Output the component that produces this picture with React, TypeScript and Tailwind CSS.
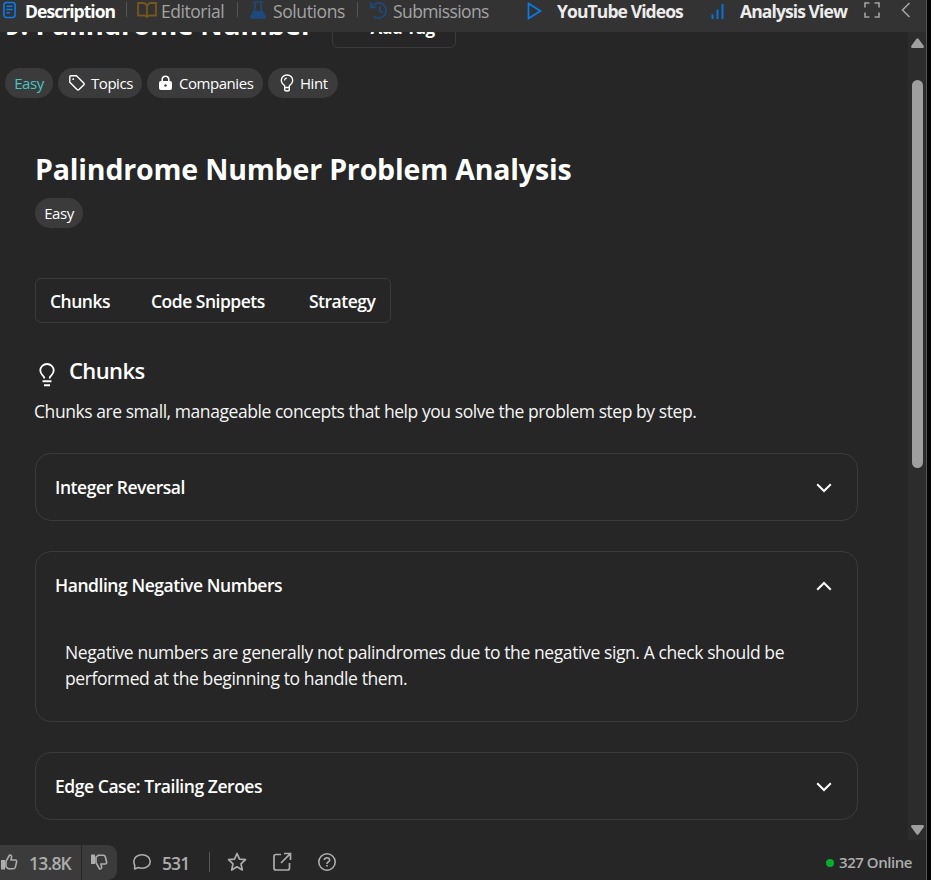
import React from "react";

const Bulb = ({ className }: { className: string }) => (
  <svg viewBox="0 0 16 24" className={className} fill="none" stroke="currentColor" strokeWidth="1.8">
    <path d="M5.200 15.500v-1.300C3.800 12.200 1.300 11 1.300 7.600a6.700 6.600 0 0 1 13.400 0c0 3.400-2.500 4.600-3.900 6.600v1.300" />
    <path d="M3.500 18.300h9M5 22.300h6" strokeWidth="2" />
  </svg>
);

const HintBulb = () => (
  <svg viewBox="0 0 14 18" className="h-[18px] w-[14px] shrink-0" fill="none" stroke="currentColor" strokeWidth="1.4">
    <path d="M4.700 13.500v-1.600C3.500 10.400 1.300 9.500 1.300 6.500a5.700 5.500 0 0 1 11.400 0c0 3-2.200 3.900-3.400 5.400v1.600Z" />
    <path d="M4.700 13v2.500q0 1.500 2.300 1.500t2.300-1.500V13" />
    <path d="M4.500 6.500Q4.600 4.300 6.800 4.100" strokeWidth="1.1" />
  </svg>
);

const Thumb = ({ down }: { down?: boolean }) => (
  <svg viewBox="0 0 18 18" className={down ? "mb-[2px] h-[18px] w-[18px] -scale-y-100" : "mb-[2px] h-[18px] w-[18px]"} fill="none" stroke="currentColor" strokeWidth="1.6" strokeLinejoin="round">
    <path d="M1 7h4v9.500H1z" fill="currentColor" stroke="none" />
    <path d="M6 13.800V8.300L9.600 2q2.200 0 2 2.200L11 7h4.300q1.600.3 1.300 2l-1.300 5.300q-.5 1.500-2 1.500H8.500z" />
  </svg>
);

const Chevron = ({ up }: { up?: boolean }) => (
  <svg viewBox="0 0 16 10" className={up ? "mt-px h-[10px] w-4 rotate-180" : "mt-px h-[10px] w-4"} fill="none" stroke="#fff" strokeWidth="2">
    <path d="m1.200 1.300 6.800 6.700 6.800-6.700" />
  </svg>
);

const Divider = ({ className }: { className: string }) => <span className={`w-px shrink-0 bg-[#545454] ${className}`} />;

function Card({ title, open, children }: { title: string; open?: boolean; children?: React.ReactNode }) {
  return (
    <section className="w-[823px] rounded-[16px] border border-[#3b3b3b]">
      <div className="flex h-[66px] items-center justify-between pr-[25px] pl-[19px]">
        <h3 className="text-[17.500px] leading-6 font-semibold tracking-[-0.450px] whitespace-nowrap">{title}</h3>
        <Chevron up={open} />
      </div>
      {children}
    </section>
  );
}

function Header() {
  return (
    <header className="flex h-8 shrink-0 bg-[#333] text-[#a3a3a3]">
      <div className="flex h-[22px] w-full items-center text-[17.500px] leading-[22px] whitespace-nowrap">
        <svg viewBox="0 0 14 18" className="mr-[9px] mb-[2px] ml-[3px] h-[18px] w-[13px] shrink-0" fill="none" stroke="#087bf0" strokeWidth="1.700">
          <rect x="1" y="1" width="12" height="16" rx="2.500" />
          <path d="M3.700 5h6.600M3.700 8.500h6.600M3.700 12h3.600" />
        </svg>
        <span className="mb-px w-[101px] font-bold tracking-[-0.950px] text-white">Description</span>
        <Divider className="mb-[3px] h-[15px]" />
        <svg viewBox="0 0 20 16" className="mr-[4px] mb-[2px] ml-[10px] h-4 w-5 shrink-0" fill="none" stroke="#77571d" strokeWidth="1.800">
          <path d="M10 3.500Q8.500 1 6 1H1v12.500h6q2.500 0 3 1.500.5-1.500 3-1.500h6V1h-5q-2.500 0-4 2.500ZM10 3.500V15" />
        </svg>
        <span className="mb-px w-[76px] tracking-[-0.450px]">Editorial</span>
        <Divider className="mb-[3px] h-[15px]" />
        <svg viewBox="0 0 16 18" className="mr-[7px] mb-[2px] ml-3 h-[18px] w-4 shrink-0" fill="none" stroke="#1d4a7c" strokeWidth="1.600">
          <path d="M3 1h10M5 1v6.500L1 15.500Q.8 17 2.300 17h11.400q1.500 0 1.300-1.500L11 7.500V1" />
          <path d="M4 10.500h8l3 6H1z" fill="#1d4a7c" />
        </svg>
        <span className="mb-px w-[84px] tracking-[-0.400px]">Solutions</span>
        <Divider className="mb-[3px] h-[15px]" />
        <svg viewBox="0 0 18 18" className="mr-[5px] mb-[2px] ml-[12px] h-[18px] w-[18px] shrink-0" fill="none" stroke="#1d4a7c" strokeWidth="1.700">
          <path d="M1 1.500v5h5M1.800 6.300A7.500 7.500 0 1 1 4 15.300M9.800 5v4.700l3 1.800" />
        </svg>
        <span className="mb-px w-[134px] tracking-[-0.600px]">Submissions</span>
        <svg viewBox="0 0 16 18" className="mr-[14px] h-[18px] w-4 shrink-0" fill="none" stroke="#087bf0" strokeWidth="1.700">
          <path d="M1.500 1.500 13.500 9 1.500 16.500Z" />
        </svg>
        <span className="w-[154px] font-bold tracking-[-0.900px] text-[#ececec]">YouTube Videos</span>
        <svg viewBox="0 0 14 18" className="mr-[15px] h-[18px] w-[14px] shrink-0" fill="none" stroke="#0873dd" strokeWidth="2">
          <path d="M1.500 12.500v4.500M6.500 7.500v9.500M11.500 2v15" />
        </svg>
        <span className="w-[124px] font-bold tracking-[-0.900px] text-[#ececec]">Analysis View</span>
        <svg viewBox="0 0 16 16" className="mb-[2px] h-4 w-4 shrink-0" fill="none" stroke="currentColor" strokeWidth="1.600">
          <path d="M1 5.500V1h4.500M10.500 1H15v4.500M15 10.500V15h-4.500M5.500 15H1v-4.500" />
        </svg>
        <svg viewBox="0 0 10 16" className="mb-[2px] ml-[21px] h-4 w-[10px] shrink-0" fill="none" stroke="currentColor" strokeWidth="1.600">
          <path d="M8.500 1 1.500 8l7 7" />
        </svg>
      </div>
    </header>
  );
}

export default function App() {
  return (
    <div className="h-[880px] w-[931px] overflow-hidden bg-[#050505] font-['Open_Sans','Noto_Sans',sans-serif] text-white">
      <div className="flex h-full w-[927px] flex-col border-r border-[#555] bg-[#262626]">
        <Header />
        <div className="flex h-[808px] shrink-0">
          <main className="w-[908px] shrink-0 overflow-hidden">
            <div className="-mt-5 flex h-9 items-start pl-[5px]">
              <h1 className="w-[327px] text-[27.500px] leading-[26px] font-bold tracking-[-0.100px] whitespace-nowrap">9. Palindrome Number</h1>
              <button className="flex h-9 w-[124px] items-center justify-center rounded-md border border-[#3b3b3b] pb-1 pl-1 text-[17px] font-bold tracking-[-0.500px]">+ Add Tag</button>
            </div>
            <div className="mt-5 flex h-[30px] gap-[5px] pl-[5px] text-[15px] tracking-[-0.450px] whitespace-nowrap">
              <span className="flex w-12 items-center justify-center rounded-full bg-[#3b3b3b] text-[#46c6c2]">Easy</span>
              <span className="flex w-[84px] items-center rounded-full bg-[#3b3b3b] pl-[11px]">
                <svg viewBox="0 0 16 16" className="mr-[6px] h-4 w-4 shrink-0" fill="none" stroke="currentColor" strokeWidth="1.400" strokeLinejoin="round">
                  <path d="M.8 2v5.200L8 14.500q1 1 2 0l4.700-4.600q1-1 0-2L7.500.8H2Q.8.8.8 2Z" />
                  <circle cx="4.200" cy="4.200" r=".9" fill="currentColor" stroke="none" />
                </svg>
                Topics
              </span>
              <span className="flex w-[116px] items-center rounded-full bg-[#3b3b3b] pl-[11px]">
                <svg viewBox="0 0 15 16" className="mr-[6px] h-4 w-[15px] shrink-0" fill="none">
                  <path d="M4.200 7V4.500a3.300 3.300 0 0 1 6.600 0V7" stroke="#fff" strokeWidth="1.600" />
                  <rect x="1" y="6" width="13" height="9" rx="2" fill="#fff" />
                  <circle cx="7.500" cy="10.500" r="1.200" fill="#3b3b3b" />
                </svg>
                Companies
              </span>
              <span className="flex w-[70px] items-center gap-[6px] rounded-full bg-[#3b3b3b] pl-3"><HintBulb />Hint</span>
            </div>
            <div className="pl-[35px]">
              <h2 className="mt-[51px] text-[28.500px] leading-10 font-bold tracking-[-0.170px] whitespace-nowrap">Palindrome Number Problem Analysis</h2>
              <span className="mt-[9px] flex h-[30px] w-12 items-center justify-center rounded-full bg-[#3b3b3b] text-[15px] tracking-[-0.450px]">Easy</span>
              <nav className="mt-[50px] flex h-[45px] w-[356px] items-center rounded-md border border-[#3b3b3b] pt-px pl-[14px] text-[17.500px] font-semibold tracking-[-0.500px] whitespace-nowrap">
                <span className="w-[101px]">Chunks</span>
                <span className="w-[158px]">Code Snippets</span>
                <span>Strategy</span>
              </nav>
              <div className="mt-8 flex h-8 items-start pl-1">
                <Bulb className="mt-[8px] mr-[14px] h-[24px] w-4" />
                <h2 className="-mt-px text-[22px] leading-8 font-semibold tracking-[-0.600px]">Chunks</h2>
              </div>
              <p className="mt-[11px] -ml-px text-[17.500px] leading-[26px] tracking-[-0.440px] whitespace-nowrap text-[#f5f5f5]">Chunks are small, manageable concepts that help you solve the problem step by step.</p>
              <div className="mt-[29px] flex flex-col gap-[30px]">
                <Card title="Integer Reversal" />
                <Card title="Handling Negative Numbers" open>
                  <p className="h-[103px] pt-[21px] pl-[29px] text-[17.500px] leading-[26px] tracking-[-0.400px] whitespace-nowrap text-[#f5f5f5]">
                    Negative numbers are generally not palindromes due to the negative sign. A check should be<br />performed at the beginning to handle them.
                  </p>
                </Card>
                <Card title="Edge Case: Trailing Zeroes" />
              </div>
            </div>
          </main>
          <aside className="flex w-[18px] flex-col items-center bg-[#2c2c2c] pt-[6px] pb-[5px] pl-[1px]">
            <svg viewBox="0 0 13 10" className="h-[10px] w-[13px] shrink-0" fill="#9f9f9f"><path d="M5.500.8q1-1 2 0L12.800 8q.4 2-1 2H1.200Q-.2 10 .2 8Z" /></svg>
            <div className="mt-8 h-[388px] w-[11px] rounded-full bg-[#9f9f9f]" />
            <svg viewBox="0 0 13 10" className="mt-auto h-[10px] w-[13px] rotate-180" fill="#9f9f9f"><path d="M5.500.8q1-1 2 0L12.800 8q.4 2-1 2H1.200Q-.2 10 .2 8Z" /></svg>
          </aside>
        </div>
        <footer className="mt-[5px] flex h-[35px] shrink-0 items-center text-[17.500px] font-semibold tracking-[-0.300px] whitespace-nowrap text-[#adadad]">
          <button className="mr-px flex h-full w-[81px] items-center bg-[#3b3b3b]"><Thumb /><span className="ml-[11px] pt-px tracking-[-0.800px]">13.8K</span></button>
          <button className="flex h-full w-[35px] items-center rounded-r-[9px] bg-[#3b3b3b] pl-2"><Thumb down /></button>
          <svg viewBox="0 0 18 16" className="mr-[11px] mb-px ml-4 h-4 w-[18px]" fill="none" stroke="currentColor" strokeWidth="1.600" strokeLinejoin="round">
            <path d="M1.700 15V11.200Q.8 9.600.8 7.500C.8 3.500 4.500.8 9 .8s8.200 2.700 8.200 6.700-3.700 6.700-8.200 6.700q-2 0-3.700-.6Z" />
          </svg>
          <span className="w-[47px] pt-px tracking-[-0.900px]">531</span>
          <Divider className="mb-px h-5" />
          <svg viewBox="0 0 20 20" className="mb-px ml-[17px] h-5 w-5" fill="none" stroke="currentColor" strokeWidth="1.700" strokeLinejoin="round">
            <path d="m10 1.500 2.500 5.600 6 .6-4.500 4.100 1.300 6.200-5.300-3.200L4.700 18 6 11.800 1.500 7.700l6-.6Z" />
          </svg>
          <svg viewBox="0 0 20 20" className="mb-px ml-[25px] h-5 w-5" fill="none" stroke="currentColor" strokeWidth="1.700">
            <path d="M9 2.500H4Q2 2.500 2 4.500V16q0 2 2 2h11.500q2 0 2-2v-5M12 1.500h6.500V8M18.300 1.700 9 11" />
          </svg>
          <svg viewBox="0 0 20 20" className="mb-px ml-[25px] h-5 w-5" fill="none" stroke="currentColor" strokeWidth="1.600">
            <circle cx="10" cy="10" r="8.200" />
            <path d="M7.300 8q.2-2.300 2.700-2.300T12.700 8q0 1.200-1.500 2-1.200.6-1.200 2" /><path d="M9.100 13h1.800v1.600H9.100z" fill="currentColor" stroke="none" />
          </svg>
          <span className="mr-[14px] ml-auto flex items-center gap-[5px] text-[15px] tracking-[-0.450px]"><i className="h-2 w-2 rounded-full bg-[#08ad2b]" />327 Online</span>
        </footer>
      </div>
    </div>
  );
}
